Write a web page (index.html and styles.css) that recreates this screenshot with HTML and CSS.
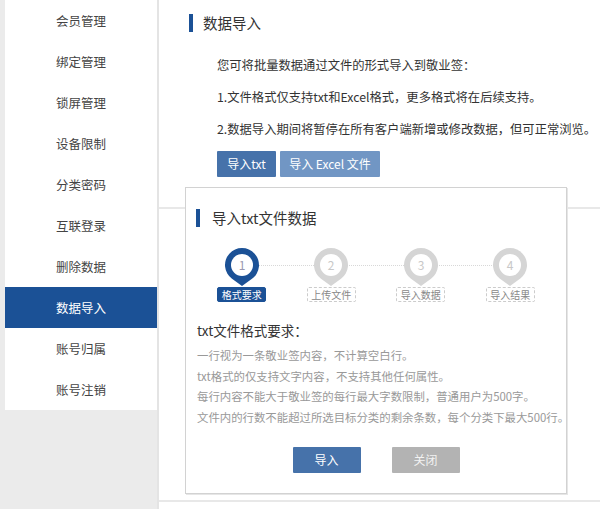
FILE: index.html
```html
<!DOCTYPE html>
<html lang="zh-CN">
<head>
  <meta charset="UTF-8">
  <meta name="viewport" content="width=device-width, initial-scale=1.0">
  <title>数据导入</title>
  <link rel="stylesheet" href="styles.css">
</head>
<body>
  <div class="wrap">
    <!-- 左侧菜单 -->
    <ul class="menu">
      <li>会员管理</li>
      <li>绑定管理</li>
      <li>锁屏管理</li>
      <li>设备限制</li>
      <li>分类密码</li>
      <li>互联登录</li>
      <li>删除数据</li>
      <li class="current">数据导入</li>
      <li>账号归属</li>
      <li>账号注销</li>
    </ul>
    <!-- 右侧内容 -->
    <div class="main">
      <div class="panel">
        <h3 class="title">数据导入</h3>
        <div class="intro">
          <p>您可将批量数据通过文件的形式导入到敬业签：</p>
          <p>1.文件格式仅支持txt和Excel格式，更多格式将在后续支持。</p>
          <p>2.数据导入期间将暂停在所有客户端新增或修改数据，但可正常浏览。</p>
          <div class="btns">
            <a href="javascript:;" class="btn">导入txt</a>
            <a href="javascript:;" class="btn light">导入 Excel 文件</a>
          </div>
        </div>
      </div>
      <div class="panel2"></div>

      <!-- 导入弹出层 -->
      <div class="dialog">
        <h3 class="title">导入txt文件数据</h3>
        <!-- 步骤条 -->
        <ol class="steps">
          <li class="current">
            <svg class="pin" width="36" height="38" viewBox="0 0 36 38"><path d="M18 38L8 30.8A17 17 0 1 1 28 30.8Z"/><circle cx="18" cy="17" r="11" fill="#fff"/><text x="18" y="21.5">1</text></svg>
            <span>格式要求</span>
          </li>
          <li>
            <svg class="pin" width="36" height="38" viewBox="0 0 36 38"><path d="M18 38L8 30.8A17 17 0 1 1 28 30.8Z"/><circle cx="18" cy="17" r="11" fill="#fff"/><text x="18" y="21.5">2</text></svg>
            <span>上传文件</span>
          </li>
          <li>
            <svg class="pin" width="36" height="38" viewBox="0 0 36 38"><path d="M18 38L8 30.8A17 17 0 1 1 28 30.8Z"/><circle cx="18" cy="17" r="11" fill="#fff"/><text x="18" y="21.5">3</text></svg>
            <span>导入数据</span>
          </li>
          <li>
            <svg class="pin" width="36" height="38" viewBox="0 0 36 38"><path d="M18 38L8 30.8A17 17 0 1 1 28 30.8Z"/><circle cx="18" cy="17" r="11" fill="#fff"/><text x="18" y="21.5">4</text></svg>
            <span>导入结果</span>
          </li>
        </ol>
        <h4 class="rule-title">txt文件格式要求：</h4>
        <ul class="rules">
          <li>一行视为一条敬业签内容，不计算空白行。</li>
          <li>txt格式的仅支持文字内容，不支持其他任何属性。</li>
          <li>每行内容不能大于敬业签的每行最大字数限制，普通用户为500字。</li>
          <li>文件内的行数不能超过所选目标分类的剩余条数，每个分类下最大500行。</li>
        </ul>
        <div class="foot">
          <a href="javascript:;" class="btn">导入</a>
          <a href="javascript:;" class="btn gray">关闭</a>
        </div>
      </div>
    </div>
  </div>
</body>
</html>
```

FILE: styles.css
```css
/* 清除默认样式 */
* {
  margin: 0;
  padding: 0;
}
ul,ol {
  list-style: none;
}
a {
  text-decoration: none;
}
body {
  background-color: #ebebeb;
  font-family: "Noto Sans CJK SC", "Microsoft YaHei", sans-serif;
  color: #333;
}
.wrap {
  display: flex;
  height: 509px;
  overflow: hidden;
}
/* 左侧菜单 */
.menu {
  width: 152px;
  margin-left: 5px;
  align-self: flex-start;
  background-color: #fff;
}
.menu li {
  height: 41px;
  font-size: 12.5px;
  line-height: 41px;
  text-align: center;
  color: #444;
  cursor: pointer;
}
.menu .current {
  background-color: #1b5196;
  color: #fff;
}
/* 右侧内容 */
.main {
  position: relative;
  flex: 1;
  min-width: 0;
  border-left: 2px solid #e4e4e4;
  background-color: #fff;
}
.title {
  height: 18px;
  border-left: 4px solid #1b5196;
  padding-left: 10px;
  font-size: 14.5px;
  font-weight: normal;
  line-height: 18px;
  color: #333;
}
.panel {
  height: 209px;
  padding-top: 14px;
  box-sizing: border-box;
  border-bottom: 2px solid #e8e8e8;
}
.panel .title {
  margin-left: 30px;
}
.intro {
  margin-left: 58px;
  padding-top: 23px;
}
.intro p {
  margin-top: 12px;
  font-size: 12.3px;
  line-height: 20px;
  white-space: nowrap;
}
.intro p:first-child {
  margin-top: 0;
}
.btns {
  display: flex;
  gap: 4px;
  margin-top: 12px;
}
.btn {
  display: block;
  width: 59px;
  height: 26px;
  border-radius: 1px;
  background-color: #4672aa;
  font-size: 12px;
  line-height: 26px;
  text-align: center;
  white-space: nowrap;
  color: #fff;
}
.btn.light {
  width: 100px;
  background-color: #7196c4;
}
.panel2 {
  height: 291px;
  border-bottom: 2px solid #e8e8e8;
}
/* 弹出层 */
.dialog {
  position: absolute;
  left: 26px;
  top: 187px;
  width: 382px;
  height: 307px;
  box-sizing: border-box;
  border: 1px solid #d2d2d2;
  box-shadow: 1px 1px 0 #e6e6e6;
  background-color: #fff;
}
.dialog .title {
  margin: 21px 0 0 10px;
  padding-left: 12px;
}
/* 步骤条 */
.steps {
  position: relative;
  display: flex;
  margin-top: 21px;
  padding: 0 11px;
}
.steps::before {
  content: "";
  position: absolute;
  left: 56px;
  right: 56px;
  top: 17px;
  border-top: 1px dotted #d8d8d8;
}
.steps li {
  flex: 1;
  display: flex;
  flex-direction: column;
  align-items: center;
}
.pin {
  position: relative;
  display: block;
  fill: #d5d5d5;
}
.pin text {
  fill: #c8c8c8;
  font-size: 12px;
  text-anchor: middle;
}
.steps span {
  width: 49px;
  height: 15px;
  margin-top: 1px;
  box-sizing: border-box;
  border: 1px dashed #ccc;
  border-radius: 2px;
  font-size: 10px;
  line-height: 13px;
  text-align: center;
  color: #888;
}
.steps .current .pin {
  fill: #1b5196;
}
.steps .current .pin text {
  fill: #9a98b0;
}
.steps .current span {
  border: 1px solid #1b5196;
  background-color: #1b5196;
  color: #fff;
}
.rule-title {
  margin: 18px 0 0 11px;
  font-size: 13.5px;
  font-weight: normal;
  line-height: 20px;
  color: #333;
}
.rules {
  margin: 5px 0 0 11px;
}
.rules li {
  font-size: 11.4px;
  line-height: 20.5px;
  white-space: nowrap;
  color: #999;
}
.foot {
  display: flex;
  justify-content: center;
  gap: 31px;
  margin-top: 20px;
}
.foot .btn {
  width: 68px;
}
.foot .gray {
  background-color: #b3b3b3;
  color: #f2f2f2;
}
```
